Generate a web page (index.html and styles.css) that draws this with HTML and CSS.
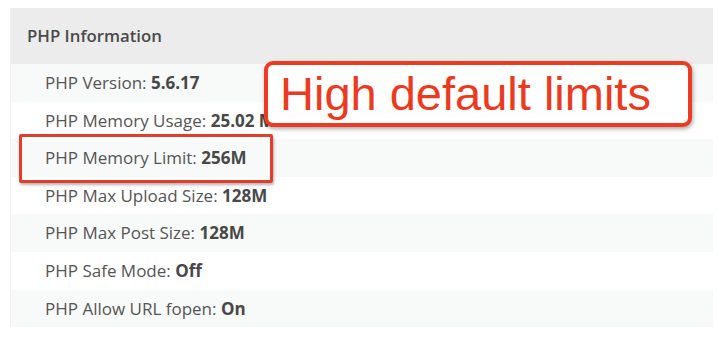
FILE: index.html
```html
<!DOCTYPE html>
<html lang="en">
<head>
    <meta charset="UTF-8">
    <title>PHP Information</title>
    <link rel="stylesheet" href="styles.css">
</head>
<body>

<div class="panel">
    <div class="panel-head">PHP Information</div>
    <ul class="info-list">
        <li>PHP Version: <b>5.6.17</b></li>
        <li>PHP Memory Usage: <b>25.02 MB</b></li>
        <li class="marked">PHP Memory Limit: <b>256M</b></li>
        <li>PHP Max Upload Size: <b>128M</b></li>
        <li>PHP Max Post Size: <b>128M</b></li>
        <li>PHP Safe Mode: <b>Off</b></li>
        <li>PHP Allow URL fopen: <b>On</b></li>
    </ul>

    <!-- annotation on top of the screenshot -->
    <div class="callout">High default limits</div>
    <div class="highlight"></div>
</div>

</body>
</html>
```

FILE: styles.css
```css
body {
    margin: 0;
    background: #fff;
    font-family: "Open Sans", sans-serif;
    color: #555;
}
.panel {
    position: relative;
    margin: 8px 8px 0 10px;
    width: 702px;
    border-left: 1px solid #f0f0f0;
}
.panel-head {
    height: 56px;
    line-height: 56px;
    padding-left: 16px;
    background-color: #ececec;
    font-size: 16.8px;
    font-weight: 600;
    color: #4a4a4a;
}
.info-list {
    list-style: none;
    margin: 0;
    padding: 0;
}
.info-list li {
    height: 37.6px;
    line-height: 38px;
    padding-left: 34px;
    font-size: 17px;
}
.info-list li:nth-child(odd) {
    background-color: #f8f9f9;
}
.info-list b {
    font-weight: 700;
    color: #484848;
}
.callout {
    position: absolute;
    left: 253px;
    top: 53px;
    width: 408px;
    height: 58px;
    border: 4px solid #ee3a22;
    border-radius: 9px;
    background: #fff;
    box-shadow: 1px 2px 4px rgba(0, 0, 0, 0.35);
    padding-left: 12px;
    font-family: "Liberation Sans", Arial, sans-serif;
    font-size: 47px;
    line-height: 58px;
    color: #ec3a21;
    white-space: nowrap;
}
.highlight {
    position: absolute;
    left: 8px;
    top: 126px;
    width: 248px;
    height: 43px;
    border: 3px solid #e23c2b;
    border-radius: 2px;
    box-shadow: 1px 2px 3px rgba(0, 0, 0, 0.3);
}
```
